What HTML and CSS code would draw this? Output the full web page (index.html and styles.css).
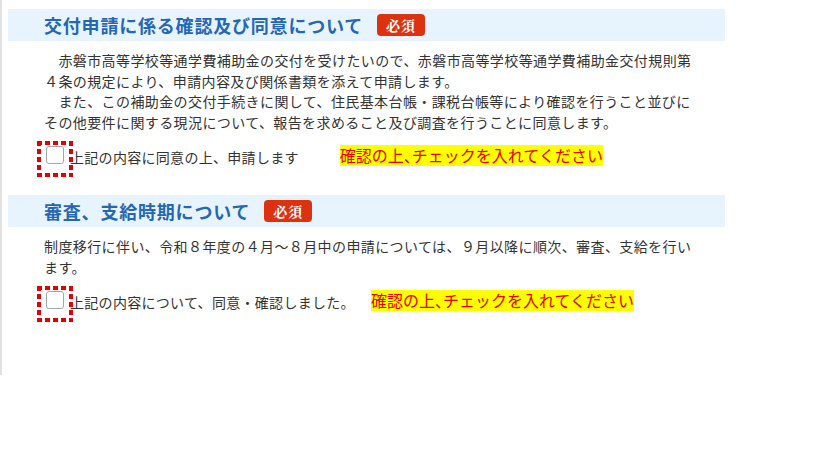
FILE: index.html
```html
<!DOCTYPE html>
<html lang="ja">
<head>
  <meta charset="UTF-8" />
  <meta name="viewport" content="width=device-width, initial-scale=1.0"/>
  <title>交付申請</title>
  <link rel="stylesheet" href="styles.css">
</head>
<body>
  <div class="page">
    <div class="section">
      <h2 class="section-title">交付申請に係る確認及び同意について<span class="badge">必須</span></h2>
      <p class="section-text">　赤磐市高等学校等通学費補助金の交付を受けたいので、赤磐市高等学校等通学費補助金交付規則第４条の規定により、申請内容及び関係書類を添えて申請します。<br>　また、この補助金の交付手続きに関して、住民基本台帳・課税台帳等により確認を行うこと並びにその他要件に関する現況について、報告を求めること及び調査を行うことに同意します。</p>
      <div class="agree-row">
        <label class="agree">
          <span class="check-wrap"><input type="checkbox" class="check"></span>
          <span class="agree-label">上記の内容に同意の上、申請します</span>
        </label>
        <span class="notice notice-first">確認の上<span class="comma">、</span>チェックを入れてください</span>
      </div>
    </div>

    <div class="section">
      <h2 class="section-title">審査、支給時期について<span class="badge">必須</span></h2>
      <p class="section-text">制度移行に伴い、令和８年度の４月～８月中の申請については、９月以降に順次、審査、支給を行います。</p>
      <div class="agree-row">
        <label class="agree">
          <span class="check-wrap"><input type="checkbox" class="check"></span>
          <span class="agree-label">上記の内容について、同意・確認しました。</span>
        </label>
        <span class="notice notice-second">確認の上<span class="comma">、</span>チェックを入れてください</span>
      </div>
    </div>
  </div>
</body>
</html>
```

FILE: styles.css
```css
body {
  margin: 0;
  background: #fff;
  font-family: "Noto Sans CJK JP", "Noto Sans", sans-serif;
  color: #333;
}
.page {
  width: 717px;
  min-height: 366px;
  padding: 9px 0 0 6px;
  border-left: 2px solid #e2e2e2;
}
.section {
  margin-bottom: 18px;
}
.section-title {
  display: flex;
  align-items: center;
  height: 32px;
  margin: 0;
  padding-left: 36px;
  background: #e8f4fd;
  color: #2467b3;
  font-size: 18px;
  font-weight: bold;
  letter-spacing: 0.8px;
}
.badge {
  display: inline-block;
  margin-left: 14px;
  padding: 0 9px;
  height: 22px;
  line-height: 22px;
  border-radius: 4px;
  background: #dc3210;
  color: #fff;
  font-family: "Noto Serif CJK JP", "Liberation Serif", serif;
  font-size: 14px;
  font-weight: bold;
  letter-spacing: 1px;
}
.section-text {
  width: 655px;
  margin: 9px 0 0 36px;
  font-size: 14px;
  line-height: 20.5px;
  letter-spacing: 0.4px;
}
.agree-row {
  display: flex;
  align-items: center;
  margin: 9px 0 0 29px;
}
.agree {
  display: flex;
  align-items: center;
  cursor: pointer;
}
.check-wrap {
  display: inline-block;
  padding: 5px 9px 13px;
  background:
    repeating-linear-gradient(90deg, #e00000 0 5px, transparent 5px 8px) top left / 100% 4px no-repeat,
    repeating-linear-gradient(90deg, #e00000 0 5px, transparent 5px 8px) bottom left / 100% 4px no-repeat,
    repeating-linear-gradient(180deg, #e00000 0 5px, transparent 5px 8px) top left / 4px 100% no-repeat,
    repeating-linear-gradient(180deg, #e00000 0 5px, transparent 5px 8px) top right / 4px 100% no-repeat;
}
.check {
  display: block;
  width: 18px;
  height: 18px;
  margin: 0;
  appearance: none;
  border: 1px solid #a6a6a6;
  border-radius: 3px;
  background: #fff;
}
.agree-label {
  margin: -4px 0 0 -3px;
  font-size: 14px;
  letter-spacing: 0.3px;
}
.notice {
  margin-top: -7px;
  background: #ffff00;
  color: #e60000;
  font-size: 16px;
  line-height: 21px;
}
.comma {
  letter-spacing: -8px;
}
.notice-first {
  margin-left: 41px;
}
.notice-second {
  margin-left: 16px;
}
```
